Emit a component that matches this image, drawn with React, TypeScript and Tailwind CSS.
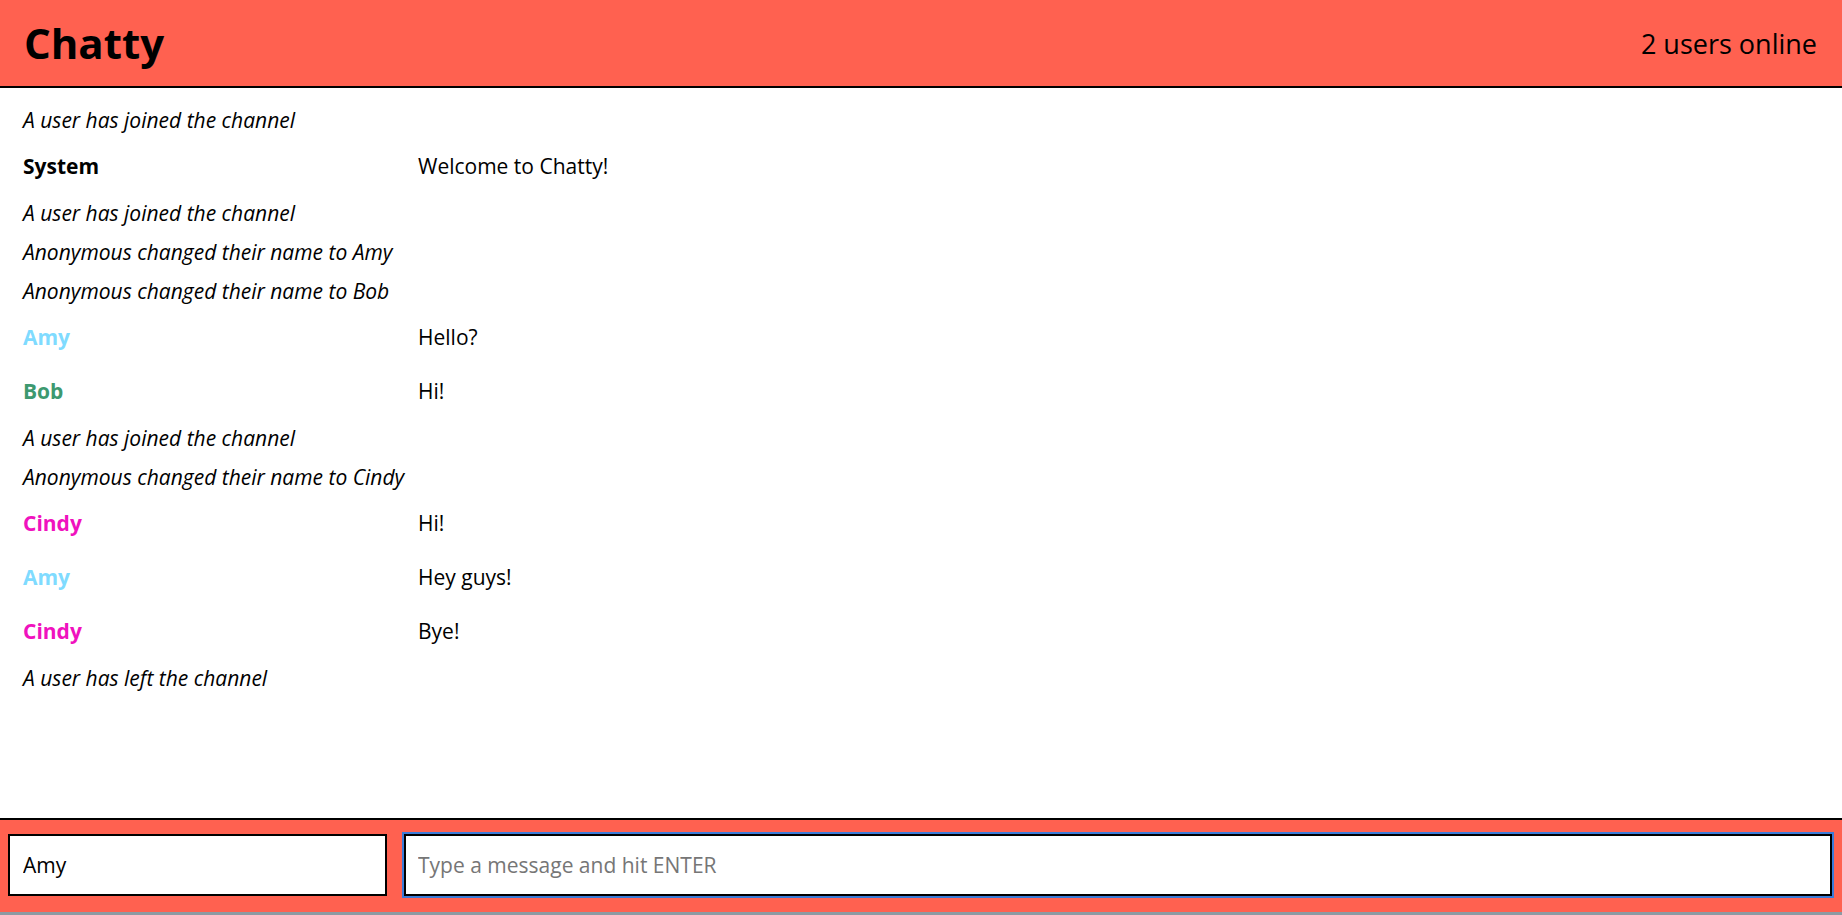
import { useState } from 'react';

type Entry =
  | { kind: 'notification'; text: string }
  | { kind: 'message'; user: string; color: string; text: string };

const entries: Entry[] = [
  { kind: 'notification', text: 'A user has joined the channel' },
  { kind: 'message', user: 'System', color: 'text-black', text: 'Welcome to Chatty!' },
  { kind: 'notification', text: 'A user has joined the channel' },
  { kind: 'notification', text: 'Anonymous changed their name to Amy' },
  { kind: 'notification', text: 'Anonymous changed their name to Bob' },
  { kind: 'message', user: 'Amy', color: 'text-[#7fdbff]', text: 'Hello?' },
  { kind: 'message', user: 'Bob', color: 'text-[#3d9970]', text: 'Hi!' },
  { kind: 'notification', text: 'A user has joined the channel' },
  { kind: 'notification', text: 'Anonymous changed their name to Cindy' },
  { kind: 'message', user: 'Cindy', color: 'text-[#f012be]', text: 'Hi!' },
  { kind: 'message', user: 'Amy', color: 'text-[#7fdbff]', text: 'Hey guys!' },
  { kind: 'message', user: 'Cindy', color: 'text-[#f012be]', text: 'Bye!' },
  { kind: 'notification', text: 'A user has left the channel' },
];

export default function App() {
  const [name, setName] = useState('Amy');
  const [draft, setDraft] = useState('');

  return (
    <div
      className="flex h-[915px] flex-col bg-white text-black"
      style={{ fontFamily: '"Open Sans", "Noto Sans", sans-serif' }}
    >
      {/* Navbar */}
      <nav className="flex h-[88px] shrink-0 items-center justify-between border-b-2 border-black bg-[#ff6150] pl-[24px] pr-[25px]">
        <span className="text-[42px] leading-none font-bold">Chatty</span>
        <span className="text-[27px] leading-none">2 users online</span>
      </nav>

      {/* Message list */}
      <main className="flex-1 overflow-auto pt-[13px] text-[21px]">
        {entries.map((e, i) =>
          e.kind === 'notification' ? (
            <div key={i} className="flex h-[39px] items-center px-[23px] italic">
              {e.text}
            </div>
          ) : (
            <div key={i} className="flex h-[54px] items-center px-[23px]">
              <span className={`w-[395px] shrink-0 font-bold ${e.color}`}>{e.user}</span>
              <span>{e.text}</span>
            </div>
          )
        )}
      </main>

      {/* Chat bar */}
      <footer className="flex h-[94px] shrink-0 items-start gap-[17px] border-t-2 border-black bg-[#ff6150] pt-[14px] pr-[10px] pl-[8px]">
        <input
          value={name}
          onChange={(ev) => setName(ev.target.value)}
          className="h-[62px] w-[379px] border-2 border-black bg-white px-[13px] text-[21px] outline-none"
        />
        <input
          autoFocus
          value={draft}
          onChange={(ev) => setDraft(ev.target.value)}
          placeholder="Type a message and hit ENTER"
          className="h-[62px] flex-1 border-2 border-black bg-white px-[12px] text-[21px] outline outline-2 outline-[#3b7bd8] placeholder:text-[#767676]"
        />
      </footer>
      <div className="h-[3px] shrink-0 bg-[#8d9aa3]" />
    </div>
  );
}
